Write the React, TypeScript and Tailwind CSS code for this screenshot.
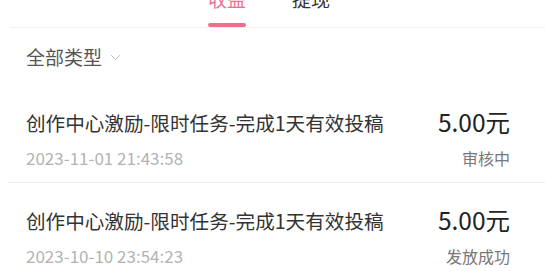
import { ChevronDown } from 'lucide-react';

interface Record {
  title: string;
  time: string;
  amount: string;
  status: string;
}

const records: Record[] = [
  { title: '创作中心激励-限时任务-完成1天有效投稿', time: '2023-11-01 21:43:58', amount: '5.00元', status: '审核中' },
  { title: '创作中心激励-限时任务-完成1天有效投稿', time: '2023-10-10 23:54:23', amount: '5.00元', status: '发放成功' },
];

const font = { fontFamily: '"Noto Sans CJK SC", "Noto Sans", sans-serif' };

export default function App() {
  return (
    <div className="w-[545px] h-[271px] bg-white overflow-hidden" style={font}>
      {/* tabs */}
      <div className="ml-[10px] h-[28px] border-b border-[#f0f0f0] flex pl-[198px] gap-[46px]">
        <div className="flex flex-col items-center -mt-[11px]">
          <span className="text-[19px] leading-[20px] text-[#f0708c]">收益</span>
          <span className="mt-[14px] h-[4px] w-[38px] rounded-full bg-[#ee6f8a]" />
        </div>
        <div className="flex flex-col items-center -mt-[11px]">
          <span className="text-[19px] leading-[20px] text-[#333]">提现</span>
        </div>
      </div>

      {/* filter */}
      <div className="h-[57px] pl-[26px] pt-[19px] flex items-start">
        <span className="text-[19px] leading-[20px] text-[#555]">全部类型</span>
        <ChevronDown className="ml-[5px] mt-[2px] text-[#b0b0b0]" size={17} strokeWidth={1.2} />
      </div>

      {/* list */}
      <div>
        {records.map((r, i) => (
          <div key={i} className="ml-[8px] border-b border-[#eeeeee]">
            <div className="pl-[18px] pr-[35px] pt-[24px] pb-[12px] flex justify-between">
              <div className="flex flex-col">
                <span className="text-[19.6px] leading-[28px] text-[#333]">{r.title}</span>
                <span className="mt-[9px] text-[17px] leading-[24px] text-[#b3b3b3]">{r.time}</span>
              </div>
              <div className="flex flex-col items-end">
                <span className="text-[24.5px] leading-[28px] text-[#222] -mt-[1px]">{r.amount}</span>
                <span className="mt-[10px] text-[16px] leading-[24px] text-[#777]">{r.status}</span>
              </div>
            </div>
          </div>
        ))}
      </div>
    </div>
  );
}
